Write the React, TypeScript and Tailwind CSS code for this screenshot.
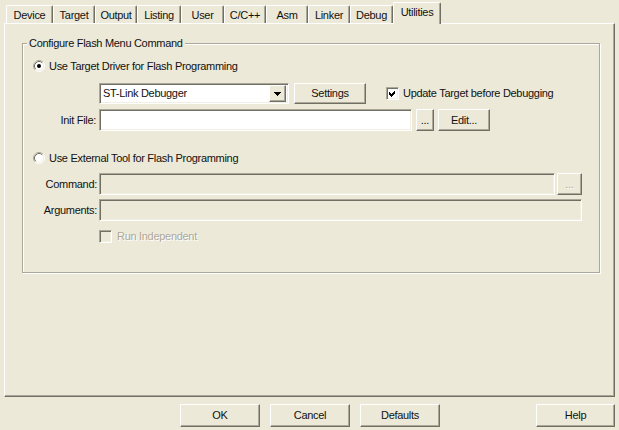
import React from "react";

// XP classic 3D edges
const raised =
  "border border-t-white border-l-white border-r-[#716F64] border-b-[#716F64] shadow-[inset_-1px_-1px_0_#ACA899]";
const sunken =
  "border border-t-[#ACA899] border-l-[#ACA899] border-r-white border-b-white shadow-[inset_1px_1px_0_#716F64,inset_-1px_-1px_0_#F1EFE2]";
const grayText = "text-[#ACA899] [text-shadow:1px_1px_0_#fff]";

const tabs = [
  { label: "Device", w: 47 },
  { label: "Target", w: 42 },
  { label: "Output", w: 42 },
  { label: "Listing", w: 44 },
  { label: "User", w: 43 },
  { label: "C/C++", w: 42 },
  { label: "Asm", w: 42 },
  { label: "Linker", w: 42 },
  { label: "Debug", w: 43 },
];

function Radio({ checked }: { checked?: boolean }) {
  return (
    <svg width="12" height="12" viewBox="0 0 12 12" className="shrink-0">
      <circle cx="6" cy="6" r="5" fill="#fff" />
      <path d="M2.11 9.89 A5.5 5.5 0 0 1 9.89 2.11" stroke="#ACA899" fill="none" />
      <path d="M9.89 2.11 A5.5 5.5 0 0 1 2.11 9.89" stroke="#fff" fill="none" />
      <path d="M2.82 9.18 A4.5 4.5 0 0 1 9.18 2.82" stroke="#716F64" fill="none" />
      <path d="M9.18 2.82 A4.5 4.5 0 0 1 2.82 9.18" stroke="#F1EFE2" fill="none" />
      {checked && <circle cx="6" cy="6" r="2" fill="#000" />}
    </svg>
  );
}

function Checkbox({ checked, disabled }: { checked?: boolean; disabled?: boolean }) {
  return (
    <div className={`${sunken} w-[13px] h-[13px] shrink-0 ${disabled ? "bg-[#ECE9D8]" : "bg-white"}`}>
      {checked && (
        <svg width="11" height="11" viewBox="0 0 11 11" shapeRendering="crispEdges">
          <polygon points="2,4 4,6 8,2 8,5 4,9 2,7" fill="#000" />
        </svg>
      )}
    </div>
  );
}

function Button({ children, className = "", disabled }: { children: React.ReactNode; className?: string; disabled?: boolean }) {
  return (
    <div className={`${raised} bg-[#ECE9D8] flex items-center justify-center shrink-0 ${disabled ? grayText : ""} ${className}`}>
      {children}
    </div>
  );
}

export default function App() {
  return (
    <div className="w-[619px] h-[430px] bg-[#ECE9D8] text-[#111] font-['Liberation_Sans',Arial,sans-serif] text-[11px] leading-[13px] tracking-[-0.3px] overflow-hidden flex flex-col select-none">
      {/* tab strip */}
      <div className="h-[23px] pl-[6px] flex items-end">
        {tabs.map((t) => (
          <div
            key={t.label}
            style={{ width: t.w }}
            className="h-[18px] pt-[3px] text-center border-t border-l border-t-white border-l-white border-r border-r-[#716F64] shadow-[inset_-1px_0_0_#ACA899] rounded-t-[2px]"
          >
            {t.label}
          </div>
        ))}
        <div className="relative z-10 -mb-px w-[48px] h-[22px] pt-[3px] text-center bg-[#ECE9D8] border-t border-l border-t-white border-l-white border-r border-r-[#716F64] shadow-[inset_-1px_0_0_#ACA899] rounded-t-[2px]">
          Utilities
        </div>
      </div>

      {/* tab page */}
      <div className={`${raised} ml-[4px] w-[611px] h-[374px]`}>
        <div className="relative ml-[17px] mt-[19px] w-[578px] h-[230px] border border-[#ACA899] shadow-[inset_1px_1px_0_#fff,1px_1px_0_#fff] flex flex-col">
          <span className="absolute left-[4px] -top-[7px] px-[2px] bg-[#ECE9D8]">Configure Flash Menu Command</span>

          <div className="mt-[15px] ml-[10px] h-[14px] flex items-center gap-[4px]">
            <Radio checked />
            <span>Use Target Driver for Flash Programming</span>
          </div>

          <div className="mt-[10px] ml-[76px] h-[21px] flex items-center">
            <div className={`${sunken} bg-white w-[190px] h-[21px] flex items-center justify-between pl-[3px] pr-[2px]`}>
              <span>ST-Link Debugger</span>
              <div className={`${raised} bg-[#ECE9D8] w-[17px] h-[17px] flex items-center justify-center`}>
                <svg width="7" height="4" viewBox="0 0 7 4" shapeRendering="crispEdges">
                  <polygon points="0,0 7,0 3.5,4" fill="#000" />
                </svg>
              </div>
            </div>
            <Button className="ml-[5px] w-[72px] h-[21px]">Settings</Button>
            <div className="ml-[20px] flex items-center gap-[4px]">
              <Checkbox checked />
              <span>Update Target before Debugging</span>
            </div>
          </div>

          <div className="mt-[5px] h-[22px] flex items-center">
            <span className="w-[73px] text-right">Init File:</span>
            <div className={`${sunken} bg-white ml-[3px] w-[313px] h-[22px]`} />
            <Button className="ml-[4px] w-[18px] h-[22px]">...</Button>
            <Button className="ml-[4px] w-[52px] h-[22px]">Edit...</Button>
          </div>

          <div className="mt-[20px] ml-[10px] h-[14px] flex items-center gap-[4px]">
            <Radio />
            <span>Use External Tool for Flash Programming</span>
          </div>

          <div className="mt-[8px] h-[22px] flex items-center">
            <span className="w-[74px] text-right">Command:</span>
            <div className={`${sunken} ml-[2px] w-[456px] h-[22px]`} />
            <Button disabled className="ml-[2px] w-[25px] h-[22px]">...</Button>
          </div>

          <div className="mt-[4px] h-[22px] flex items-center">
            <span className="w-[74px] text-right">Arguments:</span>
            <div className={`${sunken} ml-[2px] w-[483px] h-[22px]`} />
          </div>

          <div className="mt-[9px] ml-[76px] h-[13px] flex items-center gap-[5px]">
            <Checkbox disabled />
            <span className={grayText}>Run Independent</span>
          </div>
        </div>
      </div>

      {/* dialog buttons */}
      <div className="mt-[7px] ml-[180px] flex">
        <Button className="w-[80px] h-[23px]">OK</Button>
        <Button className="ml-[10px] w-[80px] h-[23px]">Cancel</Button>
        <Button className="ml-[10px] w-[80px] h-[23px]">Defaults</Button>
        <Button className="ml-[96px] w-[79px] h-[23px]">Help</Button>
      </div>
    </div>
  );
}
